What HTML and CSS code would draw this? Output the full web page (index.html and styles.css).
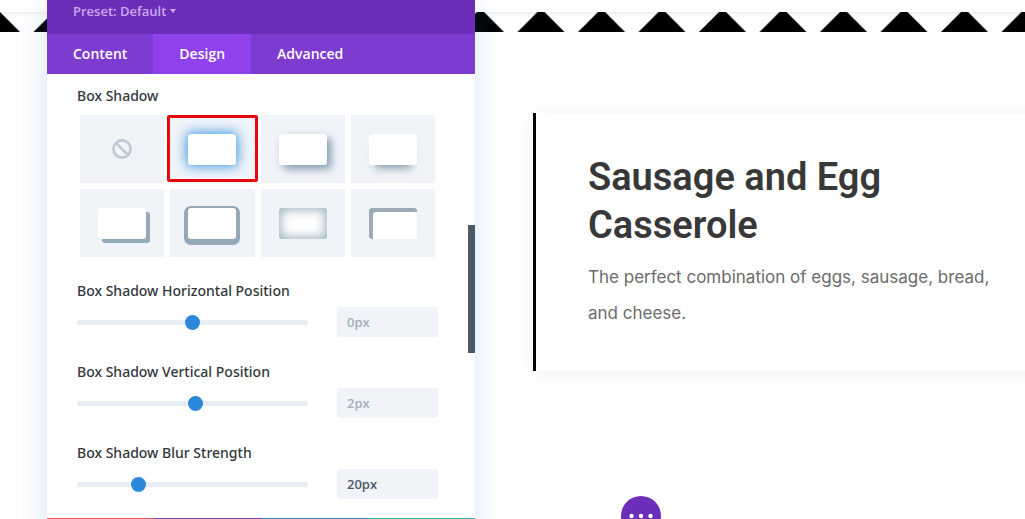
FILE: index.html
```html
<!DOCTYPE html>
<html lang="en">
<head>
    <meta charset="UTF-8">
    <meta name="viewport" content="width=device-width, initial-scale=1.0">
    <title>Sausage and Egg Casserole</title>
    <link rel="stylesheet" href="styles.css">
</head>
<body>
    <header class="site-header"></header>
    <main class="page">
        <svg class="divider" aria-hidden="true">
            <defs>
                <pattern id="teeth" x="-27" width="60.5" height="20" patternUnits="userSpaceOnUse">
                    <path d="M0 20 L20 0 H27 L47 20 Z"/>
                </pattern>
            </defs>
            <rect width="100%" height="20" fill="url(#teeth)"/>
        </svg>
        <article class="recipe-card">
            <h2>Sausage and Egg Casserole</h2>
            <p>The perfect combination of eggs, sausage, bread, and cheese.</p>
        </article>
    </main>

    <button class="page-menu" type="button" aria-label="Page menu">
        <svg width="40" height="40" viewBox="0 0 40 40" fill="#fff">
            <circle cx="10.5" cy="20" r="2.2"/>
            <circle cx="20" cy="20" r="2.2"/>
            <circle cx="29.5" cy="20" r="2.2"/>
        </svg>
    </button>

    <section class="modal">
        <div class="modal-header">
            <button class="preset" type="button">Preset: Default <span class="caret"></span></button>
        </div>
        <nav class="tabs">
            <button class="tab" type="button">Content</button>
            <button class="tab active" type="button">Design</button>
            <button class="tab" type="button">Advanced</button>
        </nav>
        <div class="modal-body">
            <div class="label" id="shadow-label">Box Shadow</div>
            <div class="presets" role="radiogroup" aria-labelledby="shadow-label">
                <label class="tile">
                    <input type="radio" name="shadow" aria-label="None">
                    <svg width="20" height="20" viewBox="0 0 20 20" fill="none" stroke="#bec9d6" stroke-width="2.6">
                        <circle cx="10" cy="10" r="8.6"/>
                        <path d="M4 4 L16 16"/>
                    </svg>
                </label>
                <label class="tile selected">
                    <input type="radio" name="shadow" aria-label="Glow" checked>
                    <span class="sample glow"></span>
                </label>
                <label class="tile">
                    <input type="radio" name="shadow" aria-label="Soft corner">
                    <span class="sample soft-corner"></span>
                </label>
                <label class="tile">
                    <input type="radio" name="shadow" aria-label="Soft bottom">
                    <span class="sample soft-bottom"></span>
                </label>
                <label class="tile">
                    <input type="radio" name="shadow" aria-label="Hard corner">
                    <span class="sample hard-corner"></span>
                </label>
                <label class="tile">
                    <input type="radio" name="shadow" aria-label="Outline">
                    <span class="sample outline"></span>
                </label>
                <label class="tile">
                    <input type="radio" name="shadow" aria-label="Inner soft">
                    <span class="sample inner-soft"></span>
                </label>
                <label class="tile">
                    <input type="radio" name="shadow" aria-label="Inner hard">
                    <span class="sample inner-hard"></span>
                </label>
            </div>

            <div class="field">
                <label class="label" for="horizontal">Box Shadow Horizontal Position</label>
                <div class="control">
                    <input class="slider" id="horizontal" type="range" min="-80" max="80" value="0">
                    <input class="value" type="text" placeholder="0px" aria-label="Horizontal position">
                </div>
            </div>
            <div class="field">
                <label class="label" for="vertical">Box Shadow Vertical Position</label>
                <div class="control">
                    <input class="slider" id="vertical" type="range" min="-80" max="80" value="2">
                    <input class="value" type="text" placeholder="2px" aria-label="Vertical position">
                </div>
            </div>
            <div class="field">
                <label class="label" for="blur">Box Shadow Blur Strength</label>
                <div class="control">
                    <input class="slider" id="blur" type="range" min="0" max="80" value="20">
                    <input class="value" type="text" value="20px" aria-label="Blur strength">
                </div>
            </div>
        </div>
        <div class="modal-footer">
            <button class="discard" type="button" aria-label="Discard"></button>
            <button class="undo" type="button" aria-label="Undo"></button>
            <button class="redo" type="button" aria-label="Redo"></button>
            <button class="save" type="button" aria-label="Save"></button>
        </div>
        <div class="scroll-thumb"></div>
    </section>
</body>
</html>
```
FILE: styles.css
```css
* {
    box-sizing: border-box;
}
body {
    position: relative;
    height: 100vh;
    margin: 0;
    overflow: hidden;
    background-color: #fff;
    font-family: "Open Sans", sans-serif;
}
button {
    padding: 0;
    border: none;
    font-family: inherit;
    cursor: pointer;
}

/* Page behind the modal */
.site-header {
    position: relative;
    height: 12px;
    background-color: #fff;
    box-shadow: 0 1px 5px rgba(0,0,0,0.1);
}
.divider {
    display: block;
    width: 100%;
    height: 20px;
}
.recipe-card {
    margin: 81px -40px 0 52%;
    padding: 40px 52px;
    border-left: 3px solid #000;
    background-color: #fff;
    box-shadow: 0 2px 20px rgba(0,0,0,0.06);
    font-family: Inter, sans-serif;
}
.recipe-card h2 {
    margin: 0 0 10px;
    color: #383838;
    font-family: Roboto, sans-serif;
    font-size: 38px;
    font-weight: 600;
    line-height: 48px;
}
.recipe-card p {
    margin: 0;
    color: #6b6b6b;
    font-size: 17px;
    line-height: 36px;
}
.page-menu {
    position: absolute;
    top: 496px;
    left: 621px;
    width: 40px;
    height: 40px;
    border-radius: 50%;
    background-color: #6c2eb9;
}

/* Settings modal */
.modal {
    position: absolute;
    top: 0;
    left: 47px;
    width: 428px;
    background-color: #fff;
    box-shadow: 0 5px 30px rgba(43,135,218,0.2);
}
.modal-header {
    height: 34px;
    padding: 1px 26px;
    background-color: #6c2eb9;
}
.preset {
    display: flex;
    align-items: center;
    gap: 4px;
    background: none;
    color: #cba9f0;
    font-size: 13px;
    font-weight: 600;
    line-height: 20px;
}
.caret {
    border: 3px solid transparent;
    border-top: 4px solid #cba9f0;
    border-bottom: none;
}
.tabs {
    display: flex;
    background-color: #7e3bd0;
}
.tab {
    height: 40px;
    padding: 0 26px 2px;
    background: none;
    color: #fff;
    font-size: 14px;
    font-weight: 600;
}
.tab.active {
    background-color: #8f42ec;
}
.modal-body {
    padding: 12px 37px 19px 30px;
}
.label {
    display: block;
    color: #32373c;
    font-family: "Noto Sans", sans-serif;
    font-size: 14px;
    font-weight: 500;
    line-height: 20px;
}
.presets {
    display: grid;
    grid-template-columns: repeat(4, 1fr);
    gap: 6px;
    margin: 9px 3px 24px;
}
.tile {
    position: relative;
    display: flex;
    align-items: center;
    justify-content: center;
    height: 68px;
    background-color: #f0f4f9;
    cursor: pointer;
}
.tile input {
    position: absolute;
    opacity: 0;
}
.tile.selected::after {
    content: "";
    position: absolute;
    inset: 0 -3px 1px;
    border: 3px solid #e60a0f;
    border-radius: 2px;
}
.sample {
    width: 48px;
    height: 31px;
    border-radius: 3px;
    background-color: #fff;
}
.glow {
    box-shadow: 0 0 12px 2px #4a9ce0;
}
.soft-corner {
    box-shadow: 4px 4px 8px #8299ab;
}
.soft-bottom {
    box-shadow: 0 9px 8px -6px #8299ab;
}
.hard-corner {
    box-shadow: 4px 4px 0 #94a8b8;
}
.outline {
    box-shadow: 0 2px 0 4px #94a8b8;
}
.inner-soft {
    box-shadow: inset 0 0 12px 1px #94a8b8;
}
.inner-hard {
    box-shadow: inset 4px 4px 0 #9aabb5;
}
.field + .field {
    margin-top: 25px;
}
.control {
    display: flex;
    align-items: center;
    gap: 29px;
    margin-top: 6px;
}
.slider {
    flex: 1;
    min-width: 0;
    height: 15px;
    margin: 0;
    background: none;
    appearance: none;
}
.slider::-webkit-slider-runnable-track {
    height: 5px;
    border-radius: 3px;
    background-color: #e6edf5;
}
.slider::-webkit-slider-thumb {
    width: 15px;
    height: 15px;
    margin-top: -5px;
    border-radius: 50%;
    background-color: #2b87da;
    appearance: none;
}
.value {
    width: 101px;
    height: 30px;
    padding: 0 10px;
    border: none;
    border-radius: 3px;
    background-color: #f0f4f9;
    color: #4c5866;
    font-family: inherit;
    font-size: 13px;
    font-weight: 600;
}
.value::placeholder {
    color: #a2b0c1;
}
.modal-footer {
    display: grid;
    grid-template-columns: repeat(4, 1fr);
    height: 40px;
}
.discard {
    background-color: #ef5555;
}
.undo {
    background-color: #7e3bd0;
}
.redo {
    background-color: #2b87da;
}
.save {
    background-color: #29c4a9;
}
.scroll-thumb {
    position: absolute;
    top: 225px;
    right: 0;
    width: 7px;
    height: 128px;
    background-color: #4c5866;
}
```
